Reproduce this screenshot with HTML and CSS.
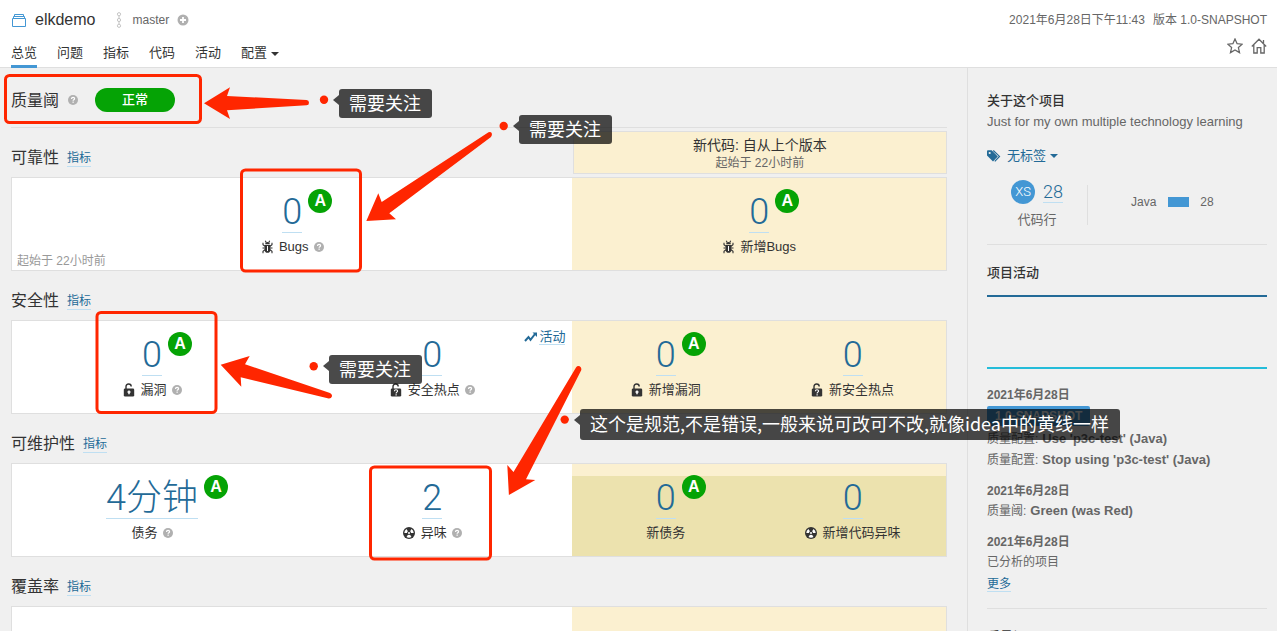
FILE: index.html
```html
<!DOCTYPE html>
<html lang="zh-CN">
<head>
<meta charset="utf-8">
<meta name="viewport" content="width=device-width, initial-scale=1">
<title>elkdemo</title>
<link rel="stylesheet" href="styles.css">
</head>
<body>
<svg class="symbols" aria-hidden="true">
  <symbol id="help" viewBox="0 0 16 16"><circle cx="8" cy="8" r="8" fill="#b0b0b0"/><path d="M5.600 6.300C5.700 4.500 6.800 3.800 8.100 3.800c1.400 0 2.400.8 2.400 2.100 0 1.700-2.300 1.800-2.300 3.400" fill="none" stroke="#fff" stroke-width="2"/><rect x="7.200" y="10.500" width="2" height="2" fill="#fff"/></symbol>
  <symbol id="bug" viewBox="0 0 12 14"><path d="M3.600 5h5.800v4.700c0 1.900-1.100 3.100-2.900 3.100s-2.900-1.200-2.900-3.100z" fill="#333"/><path d="M4.200 4.300c0-1.400.9-2.300 2.300-2.300s2.300.9 2.300 2.300z" fill="#333"/><path d="M4.300.8 5.200 2.500M8.700.8 7.800 2.500M2 2.800v2l2 1.500M11 2.800v2L9 6.300M1.500 8h2.300M11.500 8H9.200M2 13.200v-2l2-1.500M11 13.200v-2L9 9.700" fill="none" stroke="#333" stroke-width="1.100"/><path d="M6.500 6v5" stroke="#fff" stroke-width="1"/></symbol>
  <symbol id="lock" viewBox="0 0 12 14"><path d="M3 6V3.800C3 2.200 4 1 5.600 1c1.500 0 2.600 1 2.600 2.500" fill="none" stroke="#333" stroke-width="1.400"/><rect x=".8" y="5.500" width="10.400" height="8" rx="1.300" fill="#333"/><path d="M6 7.500v3.800M4.500 9h3" stroke="#fff" stroke-width="1.500"/></symbol>
  <symbol id="hotspot" viewBox="0 0 12 14"><path d="M3 6V3.800C3 2.200 4 1 5.600 1c1.500 0 2.600 1 2.600 2.500" fill="none" stroke="#333" stroke-width="1.400"/><rect x=".8" y="5.500" width="10.400" height="8" rx="1.300" fill="#333"/><path d="M4.400 8.300c0-1 .7-1.500 1.600-1.500s1.600.5 1.600 1.300c0 1.100-1.500 1-1.500 2.300" fill="none" stroke="#fff" stroke-width="1.100"/><path d="M5.500 11.200h1.200v1.200H5.500z" fill="#fff"/></symbol>
  <symbol id="smell" viewBox="1 1 12 12"><circle cx="7" cy="7" r="6" fill="#333"/><path d="M6 6.900H2.300a4.800 4.800 0 0 1 2.200-4L6.300 6zM8 6.900h3.700a4.800 4.800 0 0 0-2.200-4L7.700 6zM6.400 7.900l-1.900 3.200a5 5 0 0 0 5 0L7.600 7.900z" fill="#fff"/><circle cx="7" cy="7" r="2" fill="#333"/><circle cx="7" cy="7" r="1" fill="#fff"/></symbol>
</svg>

<header class="header">
  <div class="header-left">
    <div class="project">
      <svg class="project-icon" viewBox="0 0 14 14" fill="none" stroke="#4397d4"><path d="M.5 5.500h13v8H.5zM1.500 3.500h11M2.500 1.500h9"/><path d="M1.500 5V3.500M12.500 5V3.500M2.500 3.500v-2M11.500 3.500v-2"/></svg>
      <span class="project-name">elkdemo</span>
      <svg class="branch-icon" viewBox="0 0 6 16" fill="none" stroke="#c4c4c4"><circle cx="3" cy="2.200" r="1.600"/><circle cx="3" cy="8" r="1.600"/><circle cx="3" cy="13.800" r="1.600"/><path d="M3 4v2.200M3 9.800V12"/></svg>
      <span class="branch-name">master</span>
      <svg class="plus-icon" viewBox="0 0 12 12"><circle cx="6" cy="6" r="5.500" fill="#b0b0b0"/><path d="M6 3v6M3 6h6" stroke="#fff" stroke-width="1.800"/></svg>
    </div>
    <nav class="nav">
      <a class="nav-link nav-link-active" href="#overview">总览</a>
      <a class="nav-link" href="#issues">问题</a>
      <a class="nav-link" href="#measures">指标</a>
      <a class="nav-link" href="#code">代码</a>
      <a class="nav-link" href="#activity">活动</a>
      <a class="nav-link" href="#settings">配置<span class="caret"></span></a>
    </nav>
  </div>
  <div class="header-right">
    <div class="header-meta"><span>2021年6月28日下午11:43</span><span>版本 1.0-SNAPSHOT</span></div>
    <div class="header-actions">
      <button class="icon-button" type="button" aria-label="收藏"><svg viewBox="0 0 16 16" fill="none" stroke="#666" stroke-width="1.300"><path d="m8 1 2.100 4.700 5.100.5-3.800 3.400 1.100 5L8 12l-4.500 2.600 1.100-5L.8 6.200l5.100-.5z"/></svg></button>
      <button class="icon-button" type="button" aria-label="主页"><svg viewBox="0 0 16 16" fill="none" stroke="#666" stroke-width="1.300"><path d="M.8 8.500 8 1.200l7.200 7.300M2.800 7v8h3.400V9.700h3.600V15h3.400V7M12.500 5V2"/></svg></button>
    </div>
  </div>
</header>

<div class="page">
  <main class="main">
    <div class="gate">
      <h2 class="heading">质量阈</h2>
      <svg class="help"><use href="#help"/></svg>
      <span class="gate-status">正常</span>
    </div>

    <section>
      <div class="section-head">
        <div class="section-title"><h2 class="heading">可靠性</h2><a class="link small" href="#reliability">指标</a></div>
        <div class="leak-head"><div class="leak-title">新代码: 自从上个版本</div><div class="leak-since">起始于 22小时前</div></div>
      </div>
      <div class="card">
        <div class="cells">
          <div class="cell">
            <div class="value"><a class="number" href="#bugs">0</a><span class="rating">A</span></div>
            <div class="label"><svg class="type-icon"><use href="#bug"/></svg>Bugs<svg class="help"><use href="#help"/></svg></div>
          </div>
          <span class="since">起始于 22小时前</span>
        </div>
        <div class="cells leak">
          <div class="cell">
            <div class="value"><a class="number" href="#new-bugs">0</a><span class="rating">A</span></div>
            <div class="label"><svg class="type-icon"><use href="#bug"/></svg>新增Bugs</div>
          </div>
        </div>
      </div>
    </section>

    <section>
      <div class="section-head">
        <div class="section-title"><h2 class="heading">安全性</h2><a class="link small" href="#security">指标</a></div>
      </div>
      <div class="card">
        <div class="cells">
          <div class="cell">
            <div class="value"><a class="number" href="#vulnerabilities">0</a><span class="rating">A</span></div>
            <div class="label"><svg class="type-icon"><use href="#lock"/></svg>漏洞<svg class="help"><use href="#help"/></svg></div>
          </div>
          <div class="cell">
            <div class="value"><a class="number" href="#hotspots">0</a></div>
            <div class="label"><svg class="type-icon"><use href="#hotspot"/></svg>安全热点<svg class="help"><use href="#help"/></svg></div>
          </div>
          <div class="timeline"><svg class="timeline-icon" viewBox="0 0 14 12"><path d="m1 10 3.500-4 2 2.800L11 3" fill="none" stroke="#236a97" stroke-width="2"/><path d="M8.500 1.500H13V6z" fill="#236a97"/></svg><a class="link" href="#security-activity">活动</a></div>
        </div>
        <div class="cells leak">
          <div class="cell">
            <div class="value"><a class="number" href="#new-vulnerabilities">0</a><span class="rating">A</span></div>
            <div class="label"><svg class="type-icon"><use href="#lock"/></svg>新增漏洞</div>
          </div>
          <div class="cell">
            <div class="value"><a class="number" href="#new-hotspots">0</a></div>
            <div class="label"><svg class="type-icon"><use href="#hotspot"/></svg>新安全热点</div>
          </div>
        </div>
      </div>
    </section>

    <section>
      <div class="section-head">
        <div class="section-title"><h2 class="heading">可维护性</h2><a class="link small" href="#maintainability">指标</a></div>
      </div>
      <div class="card">
        <div class="cells">
          <div class="cell">
            <div class="value"><a class="number" href="#debt">4分钟</a><span class="rating">A</span></div>
            <div class="label">债务<svg class="help"><use href="#help"/></svg></div>
          </div>
          <div class="cell">
            <div class="value"><a class="number" href="#smells">2</a></div>
            <div class="label"><svg class="type-icon"><use href="#smell"/></svg>异味<svg class="help"><use href="#help"/></svg></div>
          </div>
        </div>
        <div class="cells leak leak-chart">
          <div class="cell">
            <div class="value"><a class="number" href="#new-debt">0</a><span class="rating">A</span></div>
            <div class="label">新债务</div>
          </div>
          <div class="cell">
            <div class="value"><a class="number" href="#new-smells">0</a></div>
            <div class="label"><svg class="type-icon"><use href="#smell"/></svg>新增代码异味</div>
          </div>
        </div>
      </div>
    </section>

    <section>
      <div class="section-head">
        <div class="section-title"><h2 class="heading">覆盖率</h2><a class="link small" href="#coverage">指标</a></div>
      </div>
      <div class="card card-empty">
        <div class="cells"></div>
        <div class="cells leak"></div>
      </div>
    </section>
  </main>

  <aside class="sidebar">
    <section class="about">
      <h3 class="side-title">关于这个项目</h3>
      <p class="description">Just for my own multiple technology learning</p>
      <button class="tags" type="button"><svg class="tags-icon" viewBox="0 0 14 12" fill="#236a97"><path d="M0 1.500C0 .8.400.3 1.200.3h3.500L10.800 6.400 6 11.400 0 5.500z"/><circle cx="2.700" cy="3" r="1.100" fill="#f0f0f0"/><path d="m6.300.5 6.200 5.900-4.700 5" fill="none" stroke="#236a97" stroke-width="1.200"/></svg>无标签<span class="caret"></span></button>
      <div class="size">
        <div class="size-main">
          <div class="size-row"><span class="size-rating">XS</span><a class="size-number" href="#lines">28</a></div>
          <div class="size-label">代码行</div>
        </div>
        <div class="languages"><span>Java</span><span class="language-bar"></span><span>28</span></div>
      </div>
    </section>
    <section class="activity">
      <h3 class="side-title">项目活动</h3>
      <div class="graph"></div>
      <div class="analysis">
        <div class="date">2021年6月28日</div>
        <div class="version">1.0-SNAPSHOT</div>
        <div class="event">质量配置: <strong>Use 'p3c-test' (Java)</strong></div>
        <div class="event">质量配置: <strong>Stop using 'p3c-test' (Java)</strong></div>
      </div>
      <div class="analysis">
        <div class="date">2021年6月28日</div>
        <div class="event">质量阈: <strong>Green (was Red)</strong></div>
      </div>
      <div class="analysis">
        <div class="date">2021年6月28日</div>
        <div class="event">已分析的项目</div>
      </div>
      <a class="link small" href="#more">更多</a>
    </section>
    <section class="activity">
      <h3 class="side-title">质量阈</h3>
    </section>
  </aside>
</div>

<div class="notes">
  <svg class="marks" width="1277" height="631">
    <g fill="none" stroke="#ff2600" stroke-width="3">
      <rect x="5.500" y="75.500" width="195" height="47" rx="4"/>
      <rect x="241.500" y="170" width="119" height="101" rx="4"/>
      <rect x="97" y="312.500" width="119" height="100" rx="4"/>
      <rect x="370.500" y="467" width="120" height="92" rx="4"/>
    </g>
    <g fill="#ff2600">
      <path d="M204 103.300 230 87.300 227 96 306.500 100Q309 100.300 309 102.700 309 105.200 306.500 105.300L227 110.300 230 119z"/>
      <path d="M366.300 221 378.300 193.300 381.700 202 488.500 132.300Q490.500 131.200 491.700 133 492.500 135 491 137L389.300 213.300 396 219.300z"/>
      <path d="M220.700 364.700 249.700 356 245 364.300 330 393Q332.200 394.200 332 396.200 331.300 398.800 328.700 398.600L240.700 377.300 241.300 386.700z"/>
      <path d="M508.900 495 507.300 465 513.500 472 576 367.500Q577.300 365.500 579.700 366.300 581.900 367.700 581.200 370.200L526 479.300 535.300 480z"/>
      <circle cx="324" cy="99.700" r="4.200"/>
      <circle cx="503.700" cy="126" r="4.200"/>
      <circle cx="313.700" cy="366.300" r="4.200"/>
      <circle cx="564.700" cy="419.600" r="4.200"/>
    </g>
  </svg>
  <div class="note note-gate">需要关注</div>
  <div class="note note-bugs">需要关注</div>
  <div class="note note-security">需要关注</div>
  <div class="note note-smells">这个是规范,不是错误,一般来说可改可不改,就像idea中的黄线一样</div>
</div>
</body>
</html>
```

FILE: styles.css
```css
* { box-sizing: border-box; }

body {
  position: relative;
  height: 100vh;
  margin: 0;
  overflow: hidden;
  background: #f0f0f0;
  color: #333;
  font: 13px/20px "Liberation Sans", "Noto Sans CJK SC", sans-serif;
}

a { color: inherit; text-decoration: none; }
h2, h3, p { margin: 0; }
button { padding: 0; border: 0; background: none; color: inherit; font: inherit; }
svg { display: block; flex: none; }
.symbols { position: absolute; width: 0; height: 0; }

.header {
  display: flex;
  justify-content: space-between;
  padding: 0 10px 0 11px;
  border-bottom: 1px solid #dfdfdf;
  background: #fff;
}
.project { display: flex; align-items: center; height: 40px; }
.project-icon { width: 14px; height: 14px; margin-left: 1px; }
.project-name { margin-left: 9px; font-size: 16px; line-height: 22px; }
.branch-icon { width: 6px; height: 16px; margin-left: 21px; }
.branch-name { margin-left: 10px; color: #666; font-size: 12px; }
.plus-icon { width: 12px; height: 12px; margin-left: 8px; }
.nav { display: flex; gap: 20px; margin-bottom: -1px; }
.nav-link { border-bottom: 3px solid transparent; line-height: 25px; }
.nav-link-active { border-color: #4397d4; }
.caret {
  display: inline-block;
  margin-left: 4px;
  border: 4px solid transparent;
  border-top-color: currentColor;
  border-bottom: 0;
  vertical-align: middle;
}
.header-right { color: #666; font-size: 12px; }
.header-meta { display: flex; gap: 8px; padding-top: 2px; line-height: 36px; }
.header-actions { display: flex; justify-content: flex-end; gap: 8px; }
.icon-button, .icon-button svg { width: 16px; height: 16px; }

.page { display: flex; }
.main { flex: 1; padding: 0 20px 0 11px; }
.heading { font-size: 16px; font-weight: 400; line-height: 20px; }
.help { width: 10px; height: 10px; margin-left: 5px; }
.link { border-bottom: 1px solid #bfdff2; color: #236a97; }
.small { font-size: 12px; line-height: 16px; }

.gate { display: flex; align-items: center; padding: 20px 0 15px; border-bottom: 1px solid #dfdfdf; }
.gate .heading { padding-top: 2px; }
.gate .help { margin-left: 9px; }
.gate-status {
  width: 80px;
  margin-left: 17px;
  border-radius: 12px;
  background: #05a305;
  color: #fff;
  font-weight: 500;
  line-height: 24px;
  text-align: center;
}

.section-head { display: flex; justify-content: space-between; }
.section-title { display: flex; gap: 8px; align-items: center; padding: 20px 0 9px; }
.leak-head {
  width: 40%;
  margin: 3px 0;
  padding: 4px 0 1px;
  border: 1px solid #dfdfdf;
  background: #fbf0d0;
  line-height: 18px;
  text-align: center;
}
.leak-title { font-size: 14px; }
.leak-since { color: #666; font-size: 12px; }
.card { display: grid; grid-template-columns: 3fr 2fr; border: 1px solid #dfdfdf; background: #fff; }
.card-empty { height: 94px; }
.cells { position: relative; display: flex; }
.leak { background: #fbf0d0; }
.leak-chart { background: linear-gradient(#fbf0d0 12px, #ece2ae 12px); }
.cell { flex: 1; padding: 12px 0 13px; text-align: center; }
.value { position: relative; width: fit-content; margin: 0 auto; }
.number {
  display: block;
  padding-top: 2px;
  border-bottom: 1px solid #bfdff2;
  color: #236a97;
  font: 300 36px/40px Roboto, "Noto Sans CJK SC", sans-serif;
}
.rating {
  position: absolute;
  top: -1px;
  left: 100%;
  width: 24px;
  margin-left: 6px;
  border-radius: 50%;
  background: #05a305;
  color: #fff;
  font-size: 16px;
  font-weight: 700;
  line-height: 24px;
}
.label { display: flex; align-items: center; justify-content: center; margin-top: 4px; }
.type-icon { width: 12px; height: 14px; margin-right: 6px; }
.since { position: absolute; bottom: -1px; left: 5px; color: #999; font-size: 12px; }
.timeline { position: absolute; top: 8px; right: 7px; display: flex; gap: 1px; align-items: center; line-height: 15px; }
.timeline-icon { width: 14px; height: 12px; }

.sidebar { width: 310px; padding: 23px 10px 0 19px; border-left: 1px solid #dfdfdf; color: #666; }
.side-title { color: #333; font-size: 13px; font-weight: 500; line-height: 20px; }
.description { line-height: 22px; }
.tags { display: flex; align-items: center; margin: 13px 0 14px; color: #236a97; }
.tags-icon { width: 14px; height: 12px; margin-right: 6px; }
.size { display: flex; align-items: center; }
.size-main { width: 100px; text-align: center; }
.size-row { display: flex; gap: 8px; align-items: center; justify-content: center; height: 24px; }
.size-rating {
  width: 24px;
  border-radius: 50%;
  background: #4397d4;
  color: #fff;
  font: 300 13px/24px Roboto, sans-serif;
}
.size-number { border-bottom: 1px solid #bfdff2; color: #236a97; font: 300 18px/20px Roboto, sans-serif; }
.size-label { margin-top: 6px; }
.languages {
  display: flex;
  align-items: center;
  height: 40px;
  padding: 0 0 6px 43px;
  border-left: 1px solid #dfdfdf;
  font-size: 12px;
}
.language-bar { width: 21px; height: 10px; margin: 0 11px 0 12px; background: #4397d4; }
.activity { margin-top: 14px; padding-top: 18px; border-top: 1px solid #dfdfdf; font-size: 12px; }
.graph { height: 74px; margin: 12px 0 16px; border-top: 2px solid #236a97; border-bottom: 2px solid #24bcd9; }
.analysis { margin-bottom: 11px; }
.analysis:last-of-type { margin-bottom: 2px; }
.date { font-weight: 700; }
.version {
  width: fit-content;
  margin: 1px 0 3px;
  padding: 0 8px;
  border-radius: 2px;
  background: #4397d4;
  color: #fff;
  font-weight: 700;
}
.event { display: flex; gap: 4px; align-items: center; }
.event + .event { margin-top: 1px; }
.event strong { font-size: 13px; }

.notes { position: absolute; top: 0; left: 0; }
.note {
  position: absolute;
  padding: 0 11px 2px 10px;
  border-radius: 3px;
  background: rgba(0, 0, 0, .71);
  color: #fff;
  font: 400 18px/27px "Noto Sans CJK SC", sans-serif;
  white-space: nowrap;
}
.note::before {
  content: "";
  position: absolute;
  top: 6px;
  right: 100%;
  border: 5px solid transparent;
  border-right: 6px solid rgba(0, 0, 0, .71);
  border-left: 0;
}
.note-gate { top: 89px; left: 339px; }
.note-bugs { top: 115px; left: 519px; }
.note-security { top: 355px; left: 329px; }
.note-smells { top: 409px; left: 580px; line-height: 29px; }
```
